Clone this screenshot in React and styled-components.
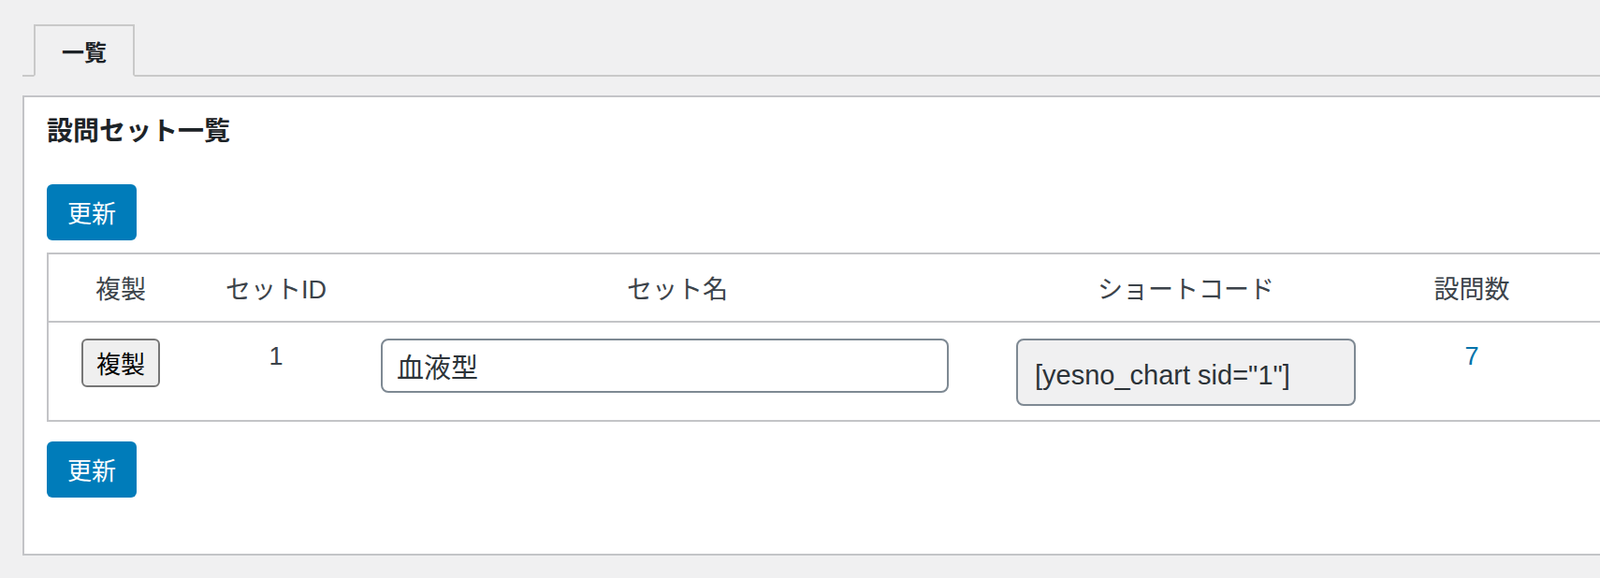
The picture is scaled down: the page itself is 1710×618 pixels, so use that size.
import React from "react";
import styled, { createGlobalStyle } from "styled-components";

const Global = createGlobalStyle`
  html, body { margin: 0; padding: 0; }
  body {
    background: #f0f0f1;
    overflow: hidden;
    font-family: "Liberation Sans", "Noto Sans CJK JP", sans-serif;
    color: #3c434a;
  }
`;

const Wrap = styled.div`
  width: 1780px;
  padding: 28px 0 0 24px;
`;

const TabBar = styled.nav`
  display: flex;
  padding-left: 12px;
  border-bottom: 2px solid #c9c9c9;
  height: 52px;
`;

const Tab = styled.div`
  width: 104px;
  height: 52px;
  border: 2px solid #c9c9c9;
  border-bottom: 2px solid #f0f0f1;
  background: #f0f0f1;
  display: flex;
  align-items: center;
  justify-content: center;
  font-family: "Noto Sans CJK JP", sans-serif;
  font-weight: 700;
  font-size: 24px;
  color: #1d2327;
  box-sizing: content-box;
  margin-top: -2px;
`;

const Card = styled.section`
  margin-top: 20px;
  background: #fff;
  border: 2px solid #c3c4c7;
  padding: 0 24px 60px;
`;

const Heading = styled.h2`
  margin: 0;
  padding-top: 14px;
  font-family: "Noto Sans CJK JP", sans-serif;
  font-size: 28px;
  line-height: 40px;
  font-weight: 700;
  color: #1d2327;
`;

const PrimaryButton = styled.button`
  display: block;
  height: 60px;
  padding: 0 22px;
  margin-top: ${(p) => p.$top}px;
  border: 0;
  border-radius: 6px;
  background: #007cba;
  color: #fff;
  font-family: "Noto Sans CJK JP", sans-serif;
  font-size: 26px;
  line-height: 60px;
  cursor: pointer;
`;

const Table = styled.table`
  margin-top: 13px;
  width: 1700px;
  border-collapse: collapse;
  table-layout: fixed;
  border: 2px solid #c3c4c7;
`;

const Th = styled.th`
  height: 71px;
  padding: 0;
  font-weight: 400;
  font-size: 27px;
  color: #3c434a;
  text-align: center;
  vertical-align: middle;
  border-bottom: 2px solid #c3c4c7;
  font-family: "Liberation Sans", "Noto Sans CJK JP", sans-serif;
`;

const Td = styled.td`
  padding: 17px 0 15px;
  padding-left: ${(p) => p.$pl || 0}px;
  vertical-align: top;
  text-align: ${(p) => p.$align || "center"};
  font-size: 27px;
  line-height: 38px;
  color: ${(p) => p.$color || "#3c434a"};
`;

const CopyButton = styled.button`
  height: 52px;
  padding: 0 14px;
  border: 2px solid #767676;
  border-radius: 6px;
  background: #efefef;
  color: #000;
  font-family: "Noto Sans CJK JP", sans-serif;
  font-size: 26px;
  line-height: 46px;
`;

const NameInput = styled.input`
  box-sizing: border-box;
  width: 607px;
  height: 58px;
  padding: 0 15px;
  border: 2px solid #7e8993;
  border-radius: 8px;
  background: #fff;
  color: #2c3338;
  font-family: "Liberation Sans", "Noto Sans CJK JP", sans-serif;
  font-size: 29px;
  outline: none;
`;

const Shortcode = styled.textarea`
  display: block;
  margin: 0 auto;
  box-sizing: border-box;
  width: 363px;
  height: 72px;
  padding: 19px 18px 0;
  border: 2px solid #7e8993;
  border-radius: 8px;
  background: #f0f0f1;
  color: #2c3338;
  font-family: "Liberation Sans", sans-serif;
  font-size: 29px;
  line-height: 36px;
  resize: none;
  overflow: hidden;
  outline: none;
`;

const CountLink = styled.a`
  color: #0073aa;
  text-decoration: none;
  font-size: 27px;
`;

const columns = [155, 178, 680, 407, 204, 76];

export default function App() {
  return (
    <>
      <Global />
      <Wrap>
        <TabBar>
          <Tab>一覧</Tab>
        </TabBar>
        <Card>
          <Heading>設問セット一覧</Heading>
          <PrimaryButton $top={39}>更新</PrimaryButton>
          <Table>
            <colgroup>
              {columns.map((w, i) => (
                <col key={i} style={{ width: w }} />
              ))}
            </colgroup>
            <thead>
              <tr>
                <Th>複製</Th>
                <Th>セットID</Th>
                <Th>セット名</Th>
                <Th>ショートコード</Th>
                <Th>設問数</Th>
                <Th></Th>
              </tr>
            </thead>
            <tbody>
              <tr>
                <Td>
                  <CopyButton>複製</CopyButton>
                </Td>
                <Td>1</Td>
                <Td $align="left" $pl={23}>
                  <NameInput defaultValue="血液型" />
                </Td>
                <Td>
                  <Shortcode readOnly rows={1} defaultValue={'[yesno_chart sid="1"]'} />
                </Td>
                <Td>
                  <CountLink href="#">7</CountLink>
                </Td>
                <Td></Td>
              </tr>
            </tbody>
          </Table>
          <PrimaryButton $top={21}>更新</PrimaryButton>
        </Card>
      </Wrap>
    </>
  );
}
